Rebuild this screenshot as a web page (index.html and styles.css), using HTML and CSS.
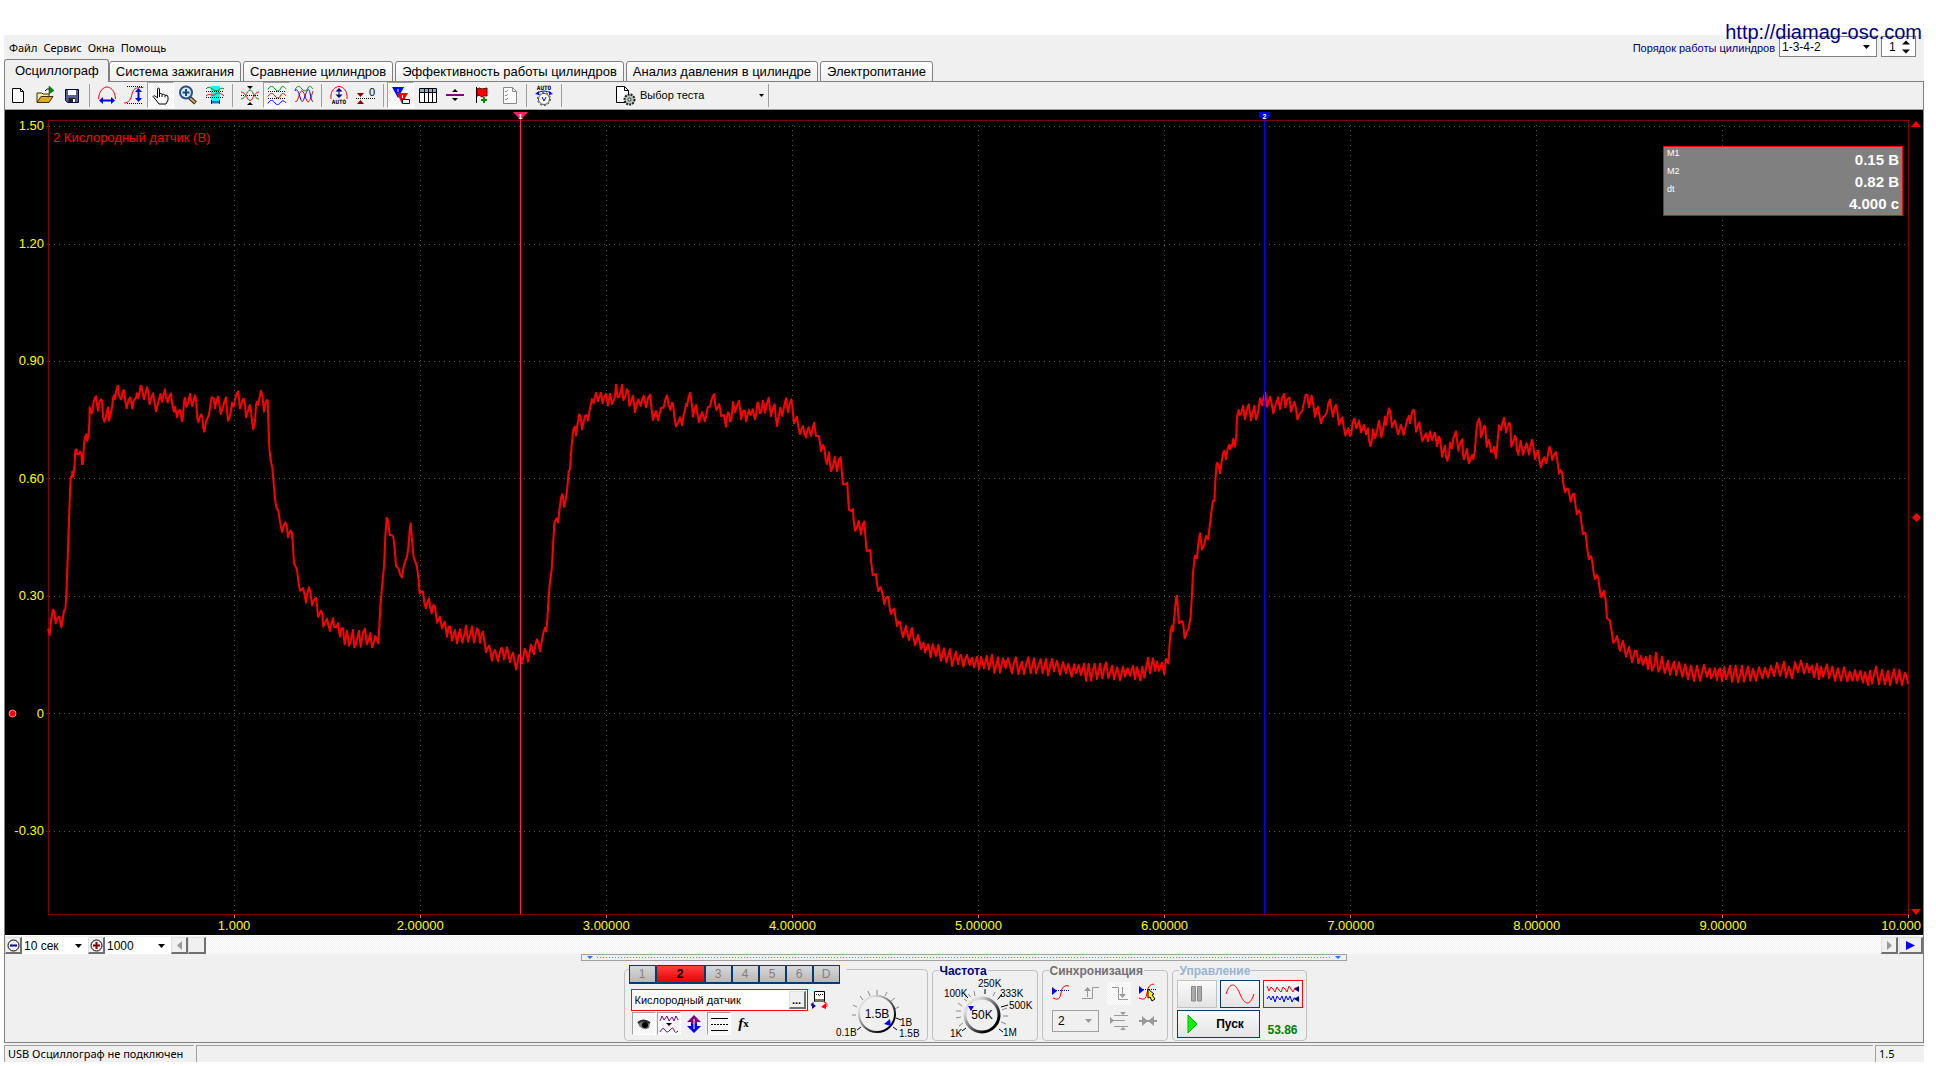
FILE: index.html
```html
<!DOCTYPE html>
<html lang="ru">
<head>
<meta charset="utf-8">
<title>Осциллограф</title>
<link rel="stylesheet" href="styles.css">
</head>
<body>
<a class="site-link" href="http://diamag-osc.com">http://diamag-osc.com</a>
<div class="window">
  <header class="header">
    <nav class="menu">
      <button type="button">Файл</button>
      <button type="button">Сервис</button>
      <button type="button">Окна</button>
      <button type="button">Помощь</button>
    </nav>
    <div class="order">
      <label for="order">Порядок работы цилиндров</label>
      <select id="order" class="combo order-select"><option>1-3-4-2</option></select>
      <div class="spinner">
        <input type="text" value="1" aria-label="Цилиндр">
        <svg width="8" height="14" viewBox="0 0 8 14"><path d="M0 4.500L4 0.500L8 4.500ZM0 9.500H8L4 13.500Z"/></svg>
      </div>
    </div>
  </header>

  <nav class="tabs">
    <button type="button" class="tab active">Осциллограф</button>
    <button type="button" class="tab">Система зажигания</button>
    <button type="button" class="tab">Сравнение цилиндров</button>
    <button type="button" class="tab">Эффективность работы цилиндров</button>
    <button type="button" class="tab">Анализ давления в цилиндре</button>
    <button type="button" class="tab">Электропитание</button>
  </nav>

  <main class="page">
    <div class="toolbar">
      <button type="button" class="tool" aria-label="Новый"><svg width="20" height="20" viewBox="0 0 20 20"><path d="M4.500 3.500H12.500L15.500 6.500V17.500H4.500Z" fill="#fff" stroke="#000"/><path d="M12.500 3.500V6.500H15.500" fill="none" stroke="#000"/></svg></button>
      <button type="button" class="tool" aria-label="Открыть"><svg width="20" height="20" viewBox="0 0 20 20"><path d="M2 17V8H7L8 9H14V11" fill="#ffe9a0" stroke="#3a3000"/><path d="M2 17.500L6 11.500H18L14 17.500Z" fill="#d9a930" stroke="#3a3000"/><path d="M10 6Q12 3 15 4" fill="none" stroke="#000"/><path d="M14 1L19 5.500L14 9Z" fill="#080" stroke="#040" stroke-width=".5"/></svg></button>
      <button type="button" class="tool" aria-label="Сохранить"><svg width="20" height="20" viewBox="0 0 20 20"><path d="M3.500 4.500H16.500V17.500H5.500L3.500 15.500Z" fill="#55609a" stroke="#000038"/><path d="M6 5H14V10H6Z" fill="#fff"/><path d="M6.500 13H13.500V17H6.500Z" fill="#222"/><path d="M11 14H13V17H11Z" fill="#fff"/></svg></button>
      <span class="sep"></span>
      <button type="button" class="tool" aria-label="Масштаб по горизонтали"><svg width="20" height="20" viewBox="0 0 20 20"><path d="M1.500 14C2 5 7 2 10 2S18 5 18.500 14" fill="none" stroke="#f00"/><path d="M4 15.500H16" stroke="#00f" stroke-width="2"/><path d="M2 15.500L6 12V19ZM18 15.500L14 12V19Z" fill="#00f"/></svg></button>
      <button type="button" class="tool" aria-label="Масштаб по вертикали"><svg width="20" height="20" viewBox="0 0 20 20"><path d="M3 1.500H19M3 18.500H19" stroke="#000" stroke-dasharray="1 1"/><path d="M0 18C5 18 7 14 8 9S12 2 19 2.500" fill="none" stroke="#f00"/><path d="M14.500 6V14" stroke="#00f" stroke-width="2"/><path d="M14.500 3L11 7H18ZM14.500 17L11 13H18Z" fill="#00f"/></svg></button>
      <button type="button" class="tool on" aria-label="Рука"><svg width="20" height="20" viewBox="0 0 20 20"><path d="M6.500 12V4Q7.500 1.500 8.500 4V9Q10 7 11 9.500Q13 8 14 10.500Q16.500 9 17 12V15L15 19H8L5 15L2 11.500Q3 9.500 6.500 13Z" fill="#fff" stroke="#000"/><path d="M8.500 9V12M11 9.500V12M14 10.500V12.500" stroke="#000"/></svg></button>
      <button type="button" class="tool" aria-label="Лупа"><svg width="20" height="20" viewBox="0 0 20 20"><path d="M11 12L17.500 18" stroke="#222" stroke-width="4"/><path d="M12 13L17 17.500" stroke="#d9a94a" stroke-width="2"/><circle cx="8" cy="7.500" r="6" fill="#d8ecfb" stroke="#2b4f84" stroke-width="2"/><path d="M8 4V11M4.500 7.500H11.500" stroke="#174a8c" stroke-width="2"/></svg></button>
      <button type="button" class="tool" aria-label="Фрагмент"><svg width="20" height="20" viewBox="0 0 20 20"><path d="M6 1H15V19H6Z" fill="#0ff"/><path d="M1 4C4 0 6 4 10 5.500S16 1 19 4" fill="none" stroke="#080"/><path d="M1 11C5 7 7 12 10 9.500S16 8 19 11" fill="none" stroke="#f00"/><path d="M1 6.500H19M1 12.500H19" stroke="#000" stroke-dasharray="1 1"/><path d="M6 17H15M6.500 15V19M14.500 15V19" stroke="#008" fill="none"/></svg></button>
      <span class="sep"></span>
      <button type="button" class="tool" aria-label="По центру"><svg width="20" height="20" viewBox="0 0 20 20"><path d="M1 10.500H19" stroke="#000" stroke-dasharray="1 1"/><path d="M1 14C6 14 7 5 10 5S14 14 19 14" fill="none" stroke="#080"/><path d="M1 7C6 7 7 15.500 10 15.500S14 7 19 7" fill="none" stroke="#f00"/><path d="M7 1H13L10 4ZM7 20H13L10 17Z"/></svg></button>
      <button type="button" class="tool on" aria-label="Раздельно"><svg width="20" height="20" viewBox="0 0 20 20"><path d="M1 4.500C3 0 6 1 8 4S13 6 14 3S18 2 19 4" fill="none" stroke="#080"/><path d="M1 11.500C3 7 6 8 8 11S13 13 14 10S18 9 19 11" fill="none" stroke="#f00"/><path d="M1 18.500C3 14 6 15 8 18S13 19 14 17S18 16 19 18" fill="none" stroke="#00f"/><path d="M1 6.500H19M1 13.500H19" stroke="#000" stroke-dasharray="1 1"/></svg></button>
      <button type="button" class="tool" aria-label="Вместе"><svg width="20" height="20" viewBox="0 0 20 20"><path d="M1 5C3 0 6 1 8 4S13 6 14 3S18 2 19 4" fill="none" stroke="#080"/><path d="M1 16C4 20 5 5 8 6S12 17 14 17S18 9 19 6" fill="none" stroke="#f00"/><path d="M1 6C2 3 4 5 6 12S9 17 11 11S15 2 16 8S18 16 19 17" fill="none" stroke="#00f"/></svg></button>
      <span class="sep"></span>
      <button type="button" class="tool" aria-label="Авто"><svg width="20" height="20" viewBox="0 0 20 20"><path d="M2 14C1 6 6 1.500 10 1.500S19 6 18 14" fill="none" stroke="#f00"/><path d="M10 4V12" stroke="#008" stroke-width="1"/><path d="M10 3L6.500 6.500H13.500ZM10 13L6.500 9.500H13.500Z" fill="#008"/><text x="10" y="19" class="tiny" text-anchor="middle">AUTO</text></svg></button>
      <button type="button" class="tool" aria-label="Ноль"><svg width="20" height="20" viewBox="0 0 20 20"><path d="M0 13.500H19" stroke="#000" stroke-dasharray="1 1"/><path d="M1 8H8L4.500 12ZM1 19H8L4.500 15Z" fill="#800000"/><text x="13" y="11" font-size="11">0</text></svg></button>
      <span class="sep"></span>
      <button type="button" class="tool on" aria-label="Маркеры"><svg width="20" height="20" viewBox="0 0 20 20"><path d="M1 2H13L7 13Z" fill="#00f"/><path d="M6 8H17L11 19Z" fill="#f00"/><path d="M7 4V7M11.500 10V13" stroke="#fff"/><path d="M11.500 14.500H18.500V18.500H11.500Z" fill="#fff" stroke="#008"/></svg></button>
      <button type="button" class="tool" aria-label="Таблица"><svg width="20" height="20" viewBox="0 0 20 20"><path d="M1.500 3.500H18.500V17.500H1.500Z" fill="#fff" stroke="#000"/><path d="M2 4H18V7H2Z" fill="#8ac"/><path d="M2 7.500H18M6.500 4V17M10.500 4V17M14.500 4V17" stroke="#000"/></svg></button>
      <button type="button" class="tool" aria-label="Линия"><svg width="20" height="20" viewBox="0 0 20 20"><path d="M1 10H19" stroke="#800080" stroke-width="2"/><path d="M7 7H13L10 4ZM7 13H13L10 16Z"/></svg></button>
      <button type="button" class="tool" aria-label="Флаг"><svg width="20" height="20" viewBox="0 0 20 20"><path d="M4.500 2V18" stroke="#000"/><path d="M5 4Q7 2 10 4L15 3V11Q12 10 10 12Q7 9 5 11Z" fill="#f00" stroke="#600"/><path d="M12 12V18M9 15H15" stroke="#080" stroke-width="2"/></svg></button>
      <button type="button" class="tool" aria-label="Список" disabled><svg width="20" height="20" viewBox="0 0 20 20"><path d="M4.500 2.500H13.500L17.500 6.500V18.500H4.500Z" fill="#fff" stroke="#888"/><path d="M13.500 2.500V6.500H17.500M6 6L7 7L9 5M6 10L7 11L9 9M6 14L7 15L9 13" fill="none" stroke="#888"/></svg></button>
      <span class="sep"></span>
      <button type="button" class="tool" aria-label="Автонастройка"><svg width="20" height="22" viewBox="0 0 20 22"><text x="10" y="6" class="tiny" text-anchor="middle">AUTO</text><path d="M3 9Q10 5 17 9" fill="none" stroke="#00f"/><path d="M1 10L5 7V11ZM19 10L15 7V11Z" fill="#00f"/><circle cx="10" cy="15" r="5.500" fill="#fff" stroke="#555"/><circle cx="10" cy="15" r="6.500" fill="none" stroke="#444" stroke-dasharray="2 2"/><path d="M8 13L10 17L12 13" fill="none" stroke="#00f"/></svg></button>
      <span class="sep"></span>
      <button type="button" class="test-pick">
        <svg width="21" height="21" viewBox="0 0 21 21"><path d="M1.500 1.500H9.500L13.500 5.500V17.500H1.500Z" fill="#fff" stroke="#000"/><path d="M9.500 1.500V5.500H13.500" fill="none" stroke="#000"/><circle cx="14.500" cy="14.500" r="5" fill="#b9c6bd" stroke="#222" stroke-width="2" stroke-dasharray="2 1"/><circle cx="14.500" cy="14.500" r="1.500" fill="#fff" stroke="#222"/></svg>
        <span>Выбор теста</span>
        <svg width="5" height="3" viewBox="0 0 5 3"><path d="M0 0H5L2.500 3Z"/></svg>
      </button>
      <span class="sep"></span>
    </div>

    <section class="scope" aria-label="Осциллограмма">
      <div class="y-axis"><span>1.50</span><span>1.20</span><span>0.90</span><span>0.60</span><span>0.30</span><span class="zero"><svg width="9" height="9" viewBox="0 0 9 9"><circle cx="4.500" cy="4.500" r="3.500" fill="#f00" stroke="#f88"/></svg>0</span><span>-0.30</span></div>
      <div class="plot">
        <svg class="trace" viewBox="144 -720 5583 2385" preserveAspectRatio="none">
          <path class="grid" d="M147 -700.500H5715M147 -348H5715M147 4.500H5715M147 355.500H5715M147 709.500H5715M147 1060.500H5715M147 1414.500H5715M703.500 -705V1656M1261.500 -705V1656M1819.500 -705V1656M2377.500 -705V1656M2935.500 -705V1656M3493.500 -705V1656M4051.500 -705V1656M4609.500 -705V1656M5167.500 -705V1656"/>
          <path class="tick" d="M703.500 1665V1674M1261.500 1665V1674M1819.500 1665V1674M2377.500 1665V1674M2935.500 1665V1674M3493.500 1665V1674M4051.500 1665V1674M4609.500 1665V1674M5167.500 1665V1674M5725.500 1665V1674"/>
          <path class="frame" d="M145.500 -718.500H5725.500V1663.500H145.500ZM138 -700.500H144M138 -348H144M138 4.500H144M138 355.500H144M138 709.500H144M138 1060.500H144M138 1414.500H144"/>
          <polyline class="wave" points="144,806 149,825 154,775 159,749 163,755 167,790 172,774 178,770 184,802 188,780 192,752 196,748 199,705 203,600 207,480 211,370 213,350 216,350 217,335 220,350 224,310 226,270 229,268 231,282 236,283 240,275 244,280 246,312 249,312 252,250 255,230 257,235 259,223 261,243 265,230 268,190 269,142 273,155 276,160 281,125 285,113 288,109 291,135 294,152 298,125 303,118 306,122 309,170 313,185 318,170 321,152 324,142 327,182 332,165 336,140 340,110 343,105 345,118 348,95 354,77 357,105 361,115 364,118 368,95 370,90 373,92 376,125 380,145 384,125 390,112 393,120 397,145 402,120 407,115 411,100 414,115 418,100 422,77 425,80 428,100 432,118 437,100 441,82 444,90 449,133 454,112 459,100 463,125 468,154 473,135 478,115 481,102 486,125 491,102 495,88 498,112 503,127 507,112 513,100 516,130 522,155 525,140 528,155 531,172 535,155 540,150 546,184 549,170 552,125 555,113 559,140 564,130 570,102 573,120 577,138 582,118 585,106 588,118 592,175 595,187 600,170 604,163 607,170 610,205 613,215 617,190 622,175 627,165 631,135 635,112 641,115 645,145 649,125 654,110 658,130 662,162 668,145 673,125 678,112 681,150 684,182 689,170 693,152 696,128 701,140 705,118 710,102 714,94 717,115 720,145 724,135 728,118 732,117 735,135 738,172 743,155 749,135 753,150 756,185 760,208 765,185 768,135 771,125 774,135 779,112 783,92 787,105 790,135 792,155 796,130 800,120 803,122 805,180 808,265 812,300 817,325 822,380 826,425 830,445 835,452 840,485 846,516 850,500 856,487 860,495 864,532 868,518 872,512 876,520 879,560 882,610 887,620 891,630 896,670 900,692 905,690 909,684 913,700 918,728 922,700 927,682 931,695 936,736 941,722 948,713 951,735 954,770 959,762 963,752 967,762 970,800 975,788 981,776 985,795 990,813 994,792 999,775 1003,802 1009,802 1014,790 1017,812 1020,830 1024,805 1029,805 1034,853 1041,812 1047,857 1052,845 1059,810 1063,862 1068,852 1077,812 1082,860 1090,815 1095,806 1100,853 1106,840 1111,820 1116,862 1122,845 1126,828 1130,838 1135,850 1138,800 1141,740 1147,670 1152,620 1156,530 1160,473 1164,480 1169,525 1175,525 1180,530 1184,565 1188,618 1195,625 1201,645 1206,652 1211,620 1216,602 1221,590 1226,555 1229,510 1232,490 1236,540 1241,592 1246,605 1251,620 1256,660 1259,700 1264,695 1269,695 1273,728 1278,745 1282,728 1287,715 1291,745 1295,760 1300,735 1305,740 1311,788 1320,770 1326,805 1334,785 1341,830 1346,800 1351,800 1356,842 1365,810 1371,850 1380,808 1387,848 1395,815 1398,797 1404,845 1410,825 1416,800 1422,848 1431,805 1436,812 1440,850"/>
          <polyline class="wave" transform="translate(1440)" points="0,850 3,830 9,815 14,850 18,877 22,865 27,857 31,870 36,902 40,880 45,870 49,885 54,904 59,880 64,863 68,867 72,898 77,880 81,862 85,880 90,907 94,890 99,878 104,905 108,928 113,905 117,885 121,885 126,910 131,885 134,866 139,877 144,905 149,875 153,854 158,870 162,883 167,850 171,838 176,850 180,874 185,845 190,820 195,803 199,813 202,780 206,710 210,665 215,630 219,560 223,490 228,478 230,475 234,487 239,445 243,415 246,403 249,412 252,440 257,420 262,385 266,335 270,328 273,280 278,225 281,205 285,200 288,227 292,195 297,163 302,170 306,208 311,185 315,168 320,165 324,182 329,150 336,117 341,130 345,112 348,98 354,124 363,98 368,130 372,112 378,102 384,136 390,101 396,132 402,120 405,110 408,74 413,112 418,110 423,90 426,74 430,120 436,108 441,88 445,95 448,138 453,125 459,107 465,157 471,130 475,118 482,138 487,118 491,107 498,142 505,112 510,104 514,140 519,180 523,165 528,153 534,181 539,160 544,143 551,143 556,118 561,106 566,135 571,150 576,128 579,130 583,170 588,200 594,188 600,172 606,196 611,165 615,150 618,132 621,138 625,115 630,98 634,120 639,170 644,145 648,135 652,160 657,187 662,172 666,157 670,168 675,184 680,160 684,140 690,140 695,118 699,107 703,102 706,138 710,150 717,132 721,150 723,168 732,165 735,185 738,200 741,170 744,157 747,160 750,184 754,180 759,126 765,157 770,140 777,122 780,145 783,178 789,152 794,152 798,184 804,160 807,150 811,165 815,158 818,148 825,178 829,160 832,130 835,128 840,160 844,155 849,122 855,158 861,130 866,113 870,145 873,168 877,150 884,133 887,170 891,198 896,172 901,143 907,168 912,140 918,115 924,157 929,130 934,118 937,140 942,190 951,170 955,200 960,222 964,208 969,198 973,220 978,232 982,212 986,202 993,228 998,205 1002,188 1006,215 1008,228 1017,228 1020,250 1023,273 1029,255 1033,262 1037,300 1041,312 1047,277 1050,310 1053,333 1059,320 1064,291 1071,333 1077,298 1082,292 1085,330 1089,373 1097,373 1102,368 1104,410 1107,450 1116,453 1119,447 1121,480 1125,512 1131,503 1136,482 1143,523 1148,492 1153,485 1157,540 1160,573 1171,570 1173,600 1178,645 1188,643 1191,670 1195,693 1202,681 1207,700 1213,733 1218,713 1225,710 1229,745 1233,762 1238,750 1243,746 1247,775 1251,798 1256,785 1260,785 1264,810 1269,832 1273,815 1278,797 1282,820 1287,840 1292,815 1296,804 1300,830 1305,856 1310,840 1314,825 1319,845 1323,867 1331,848 1335,877 1345,853 1352,892 1358,853 1368,888 1375,855 1383,902 1392,865 1399,907 1405,885 1410,868 1416,918 1422,895 1428,875 1434,912 1440,886"/>
          <polyline class="wave" transform="translate(2880)" points="0,886 3,885 10,920 16,895 21,885 29,915 36,893 42,922 51,890 57,928 63,890 72,925 80,888 87,928 96,884 103,938 114,892 120,938 129,895 137,925 144,895 156,940 162,908 168,892 175,942 180,920 186,905 192,943 199,912 205,892 212,940 222,895 228,940 235,918 242,898 248,940 258,897 264,946 271,915 276,897 282,934 291,902 300,944 309,907 318,940 325,912 335,950 342,913 348,940 356,915 363,945 372,911 378,962 386,912 393,962 399,930 404,911 411,957 420,911 427,955 433,925 438,907 445,955 456,917 462,958 472,922 480,961 489,920 495,950 503,925 510,947 519,917 525,958 531,922 541,961 547,920 553,953 558,925 564,893 570,940 579,895 585,932 591,905 597,932 606,908 613,943 618,897 625,910 629,850 632,812 636,797 639,813 644,760 648,715 651,707 654,750 657,790 665,783 670,795 674,835 679,820 686,805 692,770 695,720 699,640 703,600 705,587 711,595 715,550 720,520 723,545 726,568 732,555 738,528 744,538 749,500 755,450 759,422 763,422 766,365 769,320 771,308 776,315 780,340 785,305 789,280 793,272 798,298 803,265 808,254 810,268 815,255 816,260 820,236 825,260 829,225 831,170 836,150 839,165 844,160 849,137 855,178 861,148 866,133 873,181 879,155 883,137 888,178 894,160 900,115 906,136 911,110 916,98 921,140 926,125 930,110 935,130 940,160 946,137 951,125 954,112 960,148 966,115 972,102 976,142 982,118 988,113 993,155 998,140 1003,126 1008,145 1012,178 1019,162 1027,152 1032,128 1037,104 1042,105 1047,142 1055,107 1060,135 1065,170 1070,148 1074,140 1079,170 1083,190 1089,172 1095,168 1101,155 1105,130 1110,119 1114,145 1119,170 1123,145 1128,134 1132,155 1137,195 1142,180 1147,173 1151,200 1156,227 1160,215 1165,205 1170,228 1174,222 1178,188 1183,176 1189,205 1197,182 1203,217 1212,195 1218,223 1224,205 1227,240 1231,258 1235,245 1239,208 1245,235 1251,213 1257,182 1264,232 1270,205 1275,170 1278,195 1283,165 1287,145 1291,155 1296,202 1301,188 1305,182 1314,223 1323,195 1331,225 1337,200 1342,178 1347,168 1350,190 1355,160 1360,149 1363,155 1368,215 1373,200 1378,187 1382,215 1387,243 1398,220 1404,244 1410,215 1416,240 1425,218 1431,258 1437,230 1440,237"/>
          <polyline class="wave" transform="translate(4320)" points="0,237 3,260 6,290 11,270 15,257 18,290 22,302 27,285 30,248 36,265 40,235 48,214 51,240 55,272 60,250 67,238 69,285 72,298 77,280 81,267 85,300 87,310 92,295 97,285 100,298 105,270 108,220 112,190 117,176 120,190 123,232 128,215 133,197 136,200 140,260 147,240 150,255 154,277 160,270 162,260 168,295 173,240 177,196 183,210 187,190 192,173 198,217 203,200 208,188 211,195 214,260 220,245 225,227 228,235 231,270 235,284 242,242 249,284 255,265 260,250 267,284 272,255 276,240 280,260 285,297 290,280 295,272 298,300 303,322 307,302 313,292 318,310 323,290 328,260 332,270 337,300 342,285 348,276 352,300 357,341 362,331 366,337 370,370 375,397 380,387 385,388 392,425 398,403 403,402 407,440 411,463 417,451 421,460 425,495 429,522 436,518 439,540 443,575 447,598 453,588 457,605 461,640 465,657 471,645 475,655 480,695 484,712 492,692 497,720 501,775 510,782 515,815 520,848 525,843 531,828 536,855 540,872 549,843 558,890 567,860 576,907 585,872 590,873 595,910 603,888 609,915 618,890 624,928 630,887 636,932 643,915 648,878 655,935 660,925 666,890 674,940 684,902 690,944 702,905 709,946 717,907 727,950 736,913 744,957 753,917 762,963 771,917 780,962 792,915 801,950 809,925 813,955 819,945 825,925 831,960 836,930 840,925 846,963 853,922 858,957 863,945 870,917 876,965 887,917 894,967 900,945 906,917 912,965 924,920 931,962 939,926 948,962 957,922 967,955 975,923 984,952 993,917 1002,948 1011,908 1020,947 1032,905 1038,952 1047,920 1056,955 1065,907 1074,937 1083,902 1092,940 1101,911 1107,937 1116,917 1122,952 1131,912 1137,957 1143,920 1149,950 1161,913 1167,955 1177,920 1185,963 1194,925 1203,962 1212,922 1222,964 1229,935 1238,962 1245,930 1252,962 1261,932 1269,968 1275,937 1284,975 1290,932 1296,970 1308,920 1317,973 1326,930 1335,973 1344,932 1350,975 1362,928 1370,970 1378,930 1386,975 1395,938 1400,950 1404,972"/>
          <g class="cursor-one"><path class="hair" d="M1561.500 -744V1662"/><path class="flag" d="M1539 -744H1584L1561.500 -720Z"/><text x="1561" y="-724">1</text></g>
          <g class="cursor-two"><path class="hair" d="M3793 -744V1662"/><path class="flag" d="M3777 -744H3810V-729L3793 -720L3777 -729Z"/><text x="3793" y="-724">2</text></g>
        </svg>
        <p class="channel-name">2 Кислородный датчик (В)</p>
        <div class="readout">
          <div class="readout-keys"><span>M1</span><span>M2</span><span>dt</span></div>
          <div class="readout-values"><span>0.15 В</span><span>0.82 В</span><span>4.000 с</span></div>
        </div>
      </div>
      <div class="markers">
        <svg width="10" height="7" viewBox="0 0 10 7"><path d="M0 7H10L5 1Z"/></svg>
        <svg width="9" height="9" viewBox="0 0 9 9"><path d="M0 4.500L4.500 0L9 4.500L4.500 9Z"/></svg>
        <svg width="10" height="7" viewBox="0 0 10 7"><path d="M0 1H10L5 7Z"/></svg>
      </div>
      <div class="x-axis"><span class="first">1.000</span><span>2.00000</span><span>3.00000</span><span>4.00000</span><span>5.00000</span><span>6.00000</span><span>7.00000</span><span>8.00000</span><span>9.00000</span><span class="last">10.000</span></div>
    </section>

    <div class="timebar">
      <button type="button" class="bevel" aria-label="Уменьшить"><svg width="13" height="13" viewBox="0 0 13 13"><circle cx="6.500" cy="6.500" r="5.500" fill="none" stroke="#000"/><path d="M3 6.500H10" stroke="#008" stroke-width="2"/></svg></button>
      <select class="combo time-select" aria-label="Развёртка"><option>10 сек</option></select>
      <button type="button" class="bevel" aria-label="Увеличить"><svg width="13" height="13" viewBox="0 0 13 13"><circle cx="6.500" cy="6.500" r="5.500" fill="none" stroke="#000"/><path d="M3 6.500H10M6.500 3V10" stroke="#800000" stroke-width="2"/></svg></button>
      <select class="combo time-select" aria-label="Точки"><option>1000</option></select>
      <div class="scroll">
        <button type="button" class="bevel" aria-label="Назад" disabled><svg width="5" height="9" viewBox="0 0 5 9"><path d="M5 0V9L0 4.500Z" fill="#999"/></svg></button>
        <span class="bevel thumb"></span>
        <span class="track"></span>
        <button type="button" class="bevel" aria-label="Вперёд" disabled><svg width="5" height="9" viewBox="0 0 5 9"><path d="M0 0V9L5 4.500Z" fill="#999"/></svg></button>
      </div>
      <button type="button" class="bevel play" aria-label="Воспроизвести"><svg width="9" height="9" viewBox="0 0 9 9"><path d="M0 0V9L9 4.500Z" fill="#00f"/></svg></button>
    </div>

    <div class="splitter"><i></i><b></b><i></i></div>

    <div class="controls">
      <section class="channels" aria-label="Каналы">
        <div class="channel-left">
          <div class="channel-tabs">
            <button type="button">1</button><button type="button" class="active">2</button><button type="button">3</button><button type="button">4</button><button type="button">5</button><button type="button">6</button><button type="button">D</button>
          </div>
          <div class="channel-row">
            <div class="sensor"><input type="text" value="Кислородный датчик" aria-label="Датчик"><button type="button" class="bevel">...</button></div>
            <button type="button" class="icon-btn small" aria-label="Прибор"><svg width="20" height="20" viewBox="0 0 20 20"><path d="M5.500 1.500H15.500V11.500H5.500Z" fill="#fff" stroke="#000"/><path d="M7 4.500H14M10 5L11 7" stroke="#000" stroke-dasharray="1 1"/><path d="M6 9H15V12H6Z" fill="#6a7a60"/><path d="M5 13Q1 13 3 16" fill="none" stroke="#008"/><path d="M3 13L7 16L3 19Z" fill="#008"/><path d="M15 12Q20 13 17 17" fill="none" stroke="#f00"/><path d="M17 13L12 17L17 19Z" fill="#f00"/></svg></button>
          </div>
          <div class="channel-row icons">
            <button type="button" class="icon-btn on" aria-label="Показать"><svg width="20" height="20" viewBox="0 0 20 20"><path d="M4 9Q9 4 16 9L15 14Q10 17 5 12Z" fill="#777"/><path d="M4 9Q9 4 16 9" fill="none" stroke="#222" stroke-width="2"/><circle cx="11" cy="11" r="3"/></svg></button>
            <button type="button" class="icon-btn on" aria-label="Фильтр"><svg width="20" height="20" viewBox="0 0 20 20"><path d="M1 7L3 2L5 6L8 2L10 7L13 3L15 7L17 2L19 6" fill="none" stroke="#800080"/><path d="M7 9H13L10 12Z"/><path d="M1 18Q4 12 6 16T11 16T15 16T19 17" fill="none" stroke="#800080"/></svg></button>
            <button type="button" class="icon-btn" aria-label="Сдвиг"><svg width="20" height="20" viewBox="0 0 20 20"><path d="M10 1L17 8H13V10H7V8H3Z" fill="#800080"/><path d="M10 19L17 12H13V10H7V12H3Z" fill="#00f"/><path d="M10 5V15" stroke="#fff"/></svg></button>
            <button type="button" class="icon-btn on" aria-label="Линии"><svg width="20" height="20" viewBox="0 0 20 20"><path d="M2 4.500H19M2 16.500H19" stroke="#000"/><path d="M2 10.500H19" stroke="#000" stroke-dasharray="2 1"/></svg></button>
            <button type="button" class="icon-btn fx" aria-label="Функция"><i>f</i><sub>x</sub></button>
          </div>
        </div>
        <svg class="dial" width="90" height="56" viewBox="0 0 90 56">
          <defs><linearGradient id="rim" x1="0" y1="0" x2="1" y2="1"><stop offset=".2" stop-color="#ddd"/><stop offset=".8" stop-color="#000"/></linearGradient></defs>
          <path d="M21 33H25M22 23L26 25M29 14L32 18M37 9L39 14M46 8V13M56 10L54 14M64 16L60 19M68 25L63 27" stroke="#888"/><path d="M62 45L66 48M65 36L70 38M30 45L26 48" stroke="#000"/>
          <circle cx="46" cy="32" r="18" fill="#f0f0f0" stroke="url(#rim)" stroke-width="2"/><path d="M53 42L59 37L60 44Z" fill="#00f"/>
          <text x="46" y="36" font-size="12" text-anchor="middle">1.5В</text><text x="5" y="54">0.1В</text><text x="69" y="44">1В</text><text x="68" y="55">1.5В</text>
        </svg>
      </section>

      <fieldset class="group frequency">
        <legend>Частота</legend>
        <svg width="94" height="60" viewBox="0 0 94 60">
          <path d="M30 22L27 20M34 18L31 15M38 17L37 12M56 17L58 13M60 21L64 17M25 27L21 24M24 32H19M24 38L19 39M26 44L22 47M65 31L70 29M66 37H71M64 43L69 45" stroke="#888"/><path d="M48 10V15M31 19L27 15M61 20L65 15M64 28L71 26M29 49L25 52M62 50L66 53" stroke="#000"/>
          <circle cx="45" cy="36" r="17" fill="#f0f0f0" stroke="url(#rim)" stroke-width="3"/><path d="M31 27H37L34 32Z" fill="#00f"/>
          <text x="45" y="40" font-size="12" text-anchor="middle">50K</text><text x="41" y="8">250K</text><text x="7" y="18">100K</text><text x="63" y="18">333K</text><text x="72" y="30">500K</text><text x="13" y="58">1K</text><text x="66" y="57">1M</text>
        </svg>
      </fieldset>

      <fieldset class="group sync">
        <legend>Синхронизация</legend>
        <div class="sync-grid">
          <button type="button" class="icon-btn" aria-label="Синхронизация"><svg width="20" height="20" viewBox="0 0 20 20"><path d="M1 7.500H18" stroke="#008" stroke-dasharray="1 1"/><path d="M2 15Q9 19 10 10T18 3" fill="none" stroke="#f00"/><path d="M1 4V12L6 8Z" fill="#00f"/></svg></button>
          <button type="button" class="icon-btn" aria-label="Фронт" disabled><svg width="20" height="20" viewBox="0 0 20 20"><path d="M2 15.500H12.500V4.500H19M7.500 14V7" fill="none" stroke="#999"/><path d="M4 8L7.500 4L11 8Z" fill="#999"/></svg></button>
          <button type="button" class="icon-btn dithered" aria-label="Спад" disabled><svg width="20" height="20" viewBox="0 0 20 20"><path d="M3 4.500H9.500V16.500H19M13.500 4V12" fill="none" stroke="#999"/><path d="M10 11L13.500 15L17 11Z" fill="#999"/></svg></button>
          <button type="button" class="icon-btn" aria-label="Указать"><svg width="20" height="20" viewBox="0 0 20 20"><path d="M1 6.500H19" stroke="#008" stroke-dasharray="1 1"/><path d="M1 15Q8 19 9 10T16 1" fill="none" stroke="#f00"/><path d="M1 3V11L6 7Z" fill="#00f"/><path d="M10 6L16 11L14 12L17 16L14 18L12 14L10 15Z" fill="#ff0" stroke="#000"/></svg></button>
          <select class="sync-select" aria-label="Канал синхронизации" disabled><option>2</option></select>
          <button type="button" class="icon-btn" aria-label="Уровень" disabled><svg width="20" height="20" viewBox="0 0 20 20"><path d="M5 4.500H19M5 15.500H19M2 9.500H16" stroke="#999"/><path d="M1 6V13L5 9.500ZM11 1H17L14 4ZM11 19H17L14 16Z" fill="#999"/></svg></button>
          <button type="button" class="icon-btn" aria-label="Сжать" disabled><svg width="20" height="20" viewBox="0 0 20 20"><path d="M1 10H19" stroke="#999" stroke-width="2"/><path d="M4 5V15L10 10ZM16 5V15L10 10Z" fill="#999"/></svg></button>
        </div>
      </fieldset>

      <fieldset class="group run">
        <legend>Управление</legend>
        <div class="run-grid">
          <button type="button" class="push" disabled aria-label="Пауза"><svg width="12" height="16" viewBox="0 0 12 16"><path d="M.5 .5H4.500V15H.5ZM6.500 .5H10.500V15H6.500Z" fill="#aaa" stroke="#888"/></svg></button>
          <button type="button" class="push navy" aria-label="Синус"><svg width="30" height="20" viewBox="0 0 30 20"><path d="M1 10C5 -2 10 -2 15 10S25 22 29 10" fill="none" stroke="#f00"/></svg></button>
          <button type="button" class="push red" aria-label="Каналы"><svg width="34" height="20" viewBox="0 0 34 20"><path d="M1 2L3 7L5 3L7 5L9 8L11 3L13 6L15 8L17 3L19 5L21 8L23 2L25 5L27 8L29 4H33" fill="none" stroke="#f00"/><path d="M1 15L3 12L5 16L7 12L9 18L11 12L14 16L16 12L18 18L20 12L22 16L24 12L26 18L28 14L33 15" fill="none" stroke="#00f"/><path d="M33 2V8L28 5ZM33 12V18L28 15Z" fill="#008"/></svg></button>
          <button type="button" class="push navy start"><svg width="11" height="20" viewBox="0 0 11 20"><path d="M1 1L10 10L1 19Z" fill="#0f0" stroke="#0a0"/></svg><span>Пуск</span></button>
          <output class="fps">53.86</output>
        </div>
      </fieldset>
    </div>
  </main>

  <footer class="status"><span class="status-main">USB Осциллограф не подключен</span><span class="status-mid"></span><span class="status-end">1.5</span></footer>
</div>
</body>
</html>
```
FILE: styles.css
```css
* { box-sizing: border-box; }

:root {
  --face: #f0f0f0;
  --line: #808080;
  --soft: #a0a0a0;
  --dither: repeating-conic-gradient(#fff 0 25%, #f0f0f0 0 50%) 0 0 / 2px 2px;
}

body {
  margin: 0;
  min-height: 100vh;
  padding: 35px 12px 4px 4px;
  display: flex;
  background: #fff;
  color: #000;
  font: 11px/14px "Liberation Sans", Arial, sans-serif;
}

button, select, input {
  margin: 0;
  padding: 0;
  border: 0;
  border-radius: 0;
  background: none;
  color: inherit;
  font: inherit;
}

svg { display: block; flex: none; }

.site-link {
  position: absolute;
  top: 20px;
  right: 14px;
  z-index: 2;
  color: #000080;
  font-size: 20px;
  line-height: 24px;
  text-decoration: none;
}

.window {
  flex: 1;
  min-width: 0;
  display: flex;
  flex-direction: column;
  background: var(--face);
}

/* Menu and firing order */
.header {
  display: flex;
  justify-content: space-between;
  height: 24px;
}

.menu {
  display: flex;
  gap: 6px;
  padding: 4px 0 0 5px;
  font-family: "Noto Sans", sans-serif;
}

.menu button { height: 18px; }

.order {
  display: flex;
  gap: 4px;
  padding: 1px 8px 0 0;
}

.order label { padding-top: 5px; color: #000080; }

.combo {
  appearance: none;
  padding-left: 2px;
  background: #fff url("data:image/svg+xml,%3Csvg xmlns='http://www.w3.org/2000/svg' width='7' height='4'%3E%3Cpath d='M0 0H7L3.500 4Z'/%3E%3C/svg%3E") no-repeat right 6px center;
}

.order-select { width: 98px; height: 21px; border: 1px solid var(--line); font-size: 12px; }

.spinner {
  display: flex;
  align-items: center;
  width: 35px;
  height: 21px;
  padding: 0 5px 0 7px;
  background: #fff;
  border: 1px solid var(--line);
  font-size: 12px;
}

.spinner input { flex: 1; min-width: 0; }

/* Tabs */
.tabs {
  display: flex;
  align-items: flex-end;
  gap: 2px;
  height: 23px;
  padding-right: 1px;
  background: linear-gradient(var(--line), var(--line)) no-repeat 0 100% / 100% 1px;
}

.tab {
  height: 21px;
  padding: 0 6px;
  border: 1px solid var(--line);
  border-radius: 3px 3px 0 0;
  background: linear-gradient(#fff, #f0f0f0);
  font-size: 13px;
  line-height: 18px;
}

.tab.active {
  height: 23px;
  margin-right: -2px;
  padding: 0 9px 0 10px;
  border-bottom: 0;
  background: var(--face);
}

.page {
  flex: 1;
  display: flex;
  flex-direction: column;
  border: solid var(--line);
  border-width: 0 1px 1px;
}

/* Toolbar */
.toolbar {
  display: flex;
  align-items: center;
  height: 28px;
  padding-bottom: 1px;
  border-bottom: 1px solid var(--soft);
}

.tool {
  display: flex;
  align-items: center;
  justify-content: center;
  width: 27px;
  height: 26px;
}

.tool:first-child { width: 26px; }

.on {
  background: var(--dither);
  border: 1px solid;
  border-color: var(--soft) #fff #fff var(--soft);
}

.dithered { background: var(--dither); }

.sep {
  width: 8px;
  height: 23px;
  background: linear-gradient(var(--soft), var(--soft)) no-repeat 4px 0 / 1px 100%;
}

.tiny { font: bold 6px "DejaVu Sans Mono", monospace; }

.test-pick {
  display: flex;
  align-items: center;
  gap: 4px;
  width: 149px;
  height: 26px;
  margin-left: 50px;
}

.test-pick span { flex: 1; text-align: left; }

/* Oscillogram */
.scope {
  flex: 1;
  display: grid;
  grid-template: 10px 1fr 20px / 43px 1fr 14px;
  overflow: hidden;
  background: #000;
  color: #ff0;
  font-size: 13px;
  line-height: 16px;
}

.y-axis {
  grid-area: 2 / 1;
  display: flex;
  flex-direction: column;
  justify-content: space-between;
  margin-top: -2px;
  padding: 0 4px 76px 0;
  text-align: right;
}

.zero { display: flex; align-items: center; justify-content: space-between; padding-left: 3px; }

.plot { grid-area: 2 / 2; position: relative; min-height: 300px; }

.trace {
  position: absolute;
  inset: 0;
  width: 100%;
  height: 100%;
  overflow: visible;
  fill: none;
}

.grid { stroke: #5a5a5a; stroke-width: 3; stroke-dasharray: 3 12; shape-rendering: crispEdges; }
.tick { stroke: #909090; stroke-width: 3; shape-rendering: crispEdges; }
.frame { stroke: #800000; stroke-width: 3; shape-rendering: crispEdges; }
.wave { stroke: #f00; stroke-width: 6; stroke-linejoin: round; }
.cursor-one { stroke: #ff2060; }
.cursor-two { stroke: #00f; }
.hair { stroke-width: 3; shape-rendering: crispEdges; }
.cursor-one .flag { fill: #ff2060; stroke: none; }
.cursor-two .flag { fill: #00f; stroke: none; }
.trace text { fill: #fff; stroke: none; font-size: 21px; font-weight: bold; text-anchor: middle; }

.channel-name {
  position: absolute;
  top: 10px;
  left: 5px;
  margin: 0;
  color: #f00;
}

.readout {
  position: absolute;
  top: 26px;
  right: 6px;
  display: flex;
  justify-content: space-between;
  width: 240px;
  height: 70px;
  padding: 1px 3px;
  background: #808080;
  border: 1px solid #f00;
  color: #fff;
}

.readout span { display: block; }
.readout-keys { font-size: 9px; line-height: 18px; margin-top: -4px; }
.readout-values { padding-top: 1px; font-size: 15px; font-weight: bold; line-height: 22px; text-align: right; }

.markers {
  grid-area: 2 / 3;
  display: flex;
  flex-direction: column;
  align-items: center;
  justify-content: space-between;
  fill: #f00;
}

.x-axis {
  grid-area: 3 / 2 / 4 / 4;
  display: grid;
  grid-template-columns: 1fr repeat(9, 2fr) 1fr 14px;
  padding-top: 3px;
  text-align: center;
}

.x-axis .first { grid-column-start: 2; }
.x-axis .last { grid-column: 11 / 13; padding-right: 2px; text-align: right; }

/* Time base and scroll */
.timebar {
  display: flex;
  height: 19px;
  padding-top: 1px;
  border-top: 1px solid #fff;
  font-size: 12px;
}

.bevel {
  display: flex;
  align-items: center;
  justify-content: center;
  width: 17px;
  background: var(--face);
  border: solid;
  border-width: 1px 2px 2px 1px;
  border-color: #e0e0e0 #707070 #707070 #e0e0e0;
}

.time-select { width: 66px; }
.scroll { flex: 1; display: flex; }
.thumb { width: 18px; }
.track { flex: 1; background: var(--dither); }
.play { width: 24px; margin-left: 1px; }

.splitter {
  display: flex;
  align-items: center;
  align-self: center;
  width: 766px;
  max-width: 100%;
  height: 7px;
  padding: 0 5px;
  gap: 4px;
  border: 1px solid var(--soft);
}

.splitter i { border: solid transparent; border-width: 3px 3px 0; border-top-color: #1e78e8; }
.splitter b { flex: 1; height: 1px; background: repeating-linear-gradient(90deg, #3c96ff 0 1px, transparent 1px 3px); }

/* Bottom panel */
.controls {
  display: flex;
  justify-content: center;
  gap: 4px;
  padding: 0 0 1px 2px;
}

.channels {
  display: flex;
  width: 304px;
  margin-top: 8px;
  padding-left: 4px;
  border: 1px solid #c0c0c0;
  border-radius: 4px;
}

.channel-left { flex: none; width: 202px; margin-top: -5px; }
.channel-tabs { display: flex; width: 217px; height: 19px; background: var(--face); }

.channel-tabs button {
  width: 27px;
  background: linear-gradient(#d8d8d8, #b8b8b8);
  border: 1px solid #003c74;
  border-width: 1px 1px 2px;
  color: #808080;
  font-size: 12px;
}

.channel-tabs .active {
  width: 49px;
  background: linear-gradient(#ff4040, #e80000);
  color: #000;
  font-weight: bold;
}

.channel-row { display: flex; align-items: center; }

.sensor {
  display: flex;
  flex: none;
  width: 177px;
  height: 22px;
  margin: 5px 0 0 2px;
  padding: 1px;
  background: #fff;
  border: 1px solid #f00;
}

.sensor input { flex: 1; min-width: 0; padding-left: 2px; }
.sensor .bevel { height: 18px; font-weight: bold; line-height: 8px; }

.icon-btn {
  display: flex;
  align-items: center;
  justify-content: center;
  width: 24px;
  height: 23px;
}

.icon-btn.small { width: 26px; margin-top: 4px; height: 21px; }
.icons { gap: 1px; margin-top: 1px; padding-left: 3px; }
.fx { font: bold 15px "Liberation Serif", serif; }
.fx sub { font-size: 11px; line-height: 11px; }
.dial { margin-top: 12px; }
.dial text, .frequency text { font-family: "Liberation Sans", Arial, sans-serif; font-size: 10px; }
.dial text[font-size], .frequency text[font-size] { font-size: 12px; }

.group {
  min-width: 0;
  margin: 0;
  padding: 0 4px;
  border: 1px solid #c0c0c0;
  border-radius: 4px;
}

.group legend {
  margin-left: 2px;
  padding: 2px 1px 0;
  font-size: 12px;
  font-weight: bold;
  line-height: 16px;
}

.frequency { width: 106px; }
.frequency legend { color: #000080; }
.frequency svg { overflow: visible; }
.sync { width: 126px; }
.sync legend { color: #707070; }
.run { width: 135px; }
.run legend { color: #99b4d1; }

.sync-grid {
  display: grid;
  grid-template-columns: repeat(4, 29px);
  grid-template-rows: 28px 28px;
  place-items: center;
}

.sync-select {
  appearance: none;
  grid-column: span 2;
  width: 47px;
  height: 22px;
  padding-left: 5px;
  border: 1px solid var(--soft);
  background: url("data:image/svg+xml,%3Csvg xmlns='http://www.w3.org/2000/svg' width='7' height='4'%3E%3Cpath fill='%23999' d='M0 0H7L3.500 4Z'/%3E%3C/svg%3E") no-repeat right 6px center;
  font-size: 12px;
  opacity: 1;
}

.run-grid {
  display: grid;
  grid-template-columns: 40px 40px 40px;
  grid-template-rows: 28px 28px;
  gap: 2px 3px;
  padding: 1px 0 2px;
}

.push {
  display: flex;
  align-items: center;
  justify-content: center;
  border: 1px solid #c0c0c0;
  background: linear-gradient(#fafafa, #e4e4e4);
}

.push.navy { border-color: #003c74; }
.push.red { border-color: #f00; }
.push.start { grid-column: span 2; gap: 18px; padding-right: 5px; font-size: 12px; font-weight: bold; }
.fps { align-self: center; padding-top: 11px; color: #008000; font-size: 12px; font-weight: bold; text-align: center; }

/* Status bar */
.status {
  display: flex;
  gap: 2px;
  padding-top: 2px;
  font-family: "Noto Sans", sans-serif;
}

.status span { height: 17px; padding: 0 3px; border: solid var(--soft); border-width: 1px 0 0 1px; line-height: 15px; }
.status-main { width: 190px; }
.status-mid { flex: 1; }
.status-end { width: 49px; }
```
